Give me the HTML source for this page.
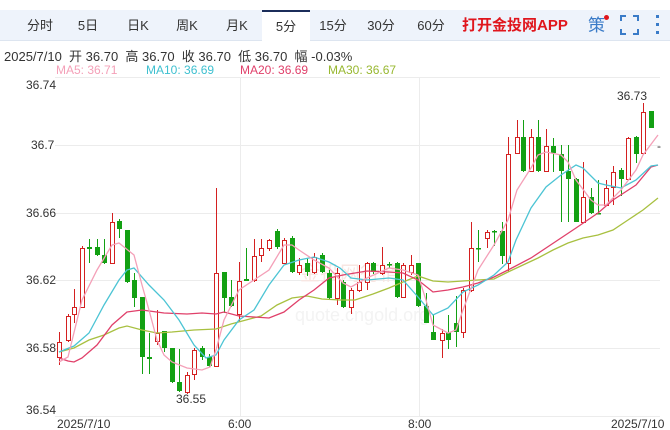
<!DOCTYPE html>
<html><head><meta charset="utf-8"><style>
*{margin:0;padding:0;box-sizing:border-box}
body{width:670px;height:430px;background:#fff;font-family:"Liberation Sans","Noto Sans CJK SC",sans-serif;position:relative;overflow:hidden}
.tabs{position:absolute;top:10px;left:0;width:670px;height:31px;background:#eef3fb;border-bottom:1px solid #dde5f0}
.tab{position:absolute;top:10px;height:31px;line-height:31px;font-size:13px;color:#333;text-align:center}
.sel{background:#fff;border-top:2px solid #1b2d5a;line-height:29px;height:32px}
.app{position:absolute;left:462px;top:10px;line-height:31px;font-size:15px;font-weight:bold;color:#e0161d}
.ce{position:absolute;left:588px;top:10px;line-height:31px;font-size:17px;color:#3a7bc8}
.dot{position:absolute;left:604px;top:15px;width:5px;height:5px;border-radius:50%;background:#e0161d}
.info{position:absolute;left:4px;top:46px;font-size:13px;color:#333;white-space:nowrap}
.ma{position:absolute;top:63px;font-size:12px;white-space:nowrap}
</style></head><body>
<div class="tabs"></div>
<div class="tab" style="left:18px;width:44px">分时</div>
<div class="tab" style="left:66px;width:44px">5日</div>
<div class="tab" style="left:116px;width:44px">日K</div>
<div class="tab" style="left:164px;width:46px">周K</div>
<div class="tab" style="left:214px;width:46px">月K</div>
<div class="tab sel" style="left:262px;width:48px">5分</div>
<div class="tab" style="left:310px;width:46px">15分</div>
<div class="tab" style="left:358px;width:46px">30分</div>
<div class="tab" style="left:406px;width:50px">60分</div>
<div class="app">打开金投网APP</div>
<div class="ce">策</div><div class="dot"></div>
<svg style="position:absolute;left:0;top:0" width="670" height="430">
<g stroke="#3a7bc8" stroke-width="2" fill="none">
<path d="M621 21v-5h5M633 16h5v5M638 29v5h-5M626 34h-5v-5"/></g>
<g fill="#3a7bc8"><rect x="656" y="15" width="3" height="3"/><rect x="656" y="23" width="3" height="3"/><rect x="656" y="31" width="3" height="3"/></g>
<g stroke="#ececec" stroke-width="1">
<line x1="55" y1="77.5" x2="660" y2="77.5"/><line x1="55" y1="145.5" x2="660" y2="145.5"/><line x1="55" y1="213.5" x2="660" y2="213.5"/><line x1="55" y1="280.5" x2="660" y2="280.5"/><line x1="55" y1="348.5" x2="660" y2="348.5"/><line x1="55" y1="416.5" x2="660" y2="416.5"/>
<line x1="240.5" y1="77" x2="240.5" y2="416"/><line x1="419.5" y1="77" x2="419.5" y2="416"/>
</g>
<g font-size="12" fill="#333">
<text x="26" y="89">36.74</text><text x="31" y="149">36.7</text><text x="26" y="217">36.66</text><text x="26" y="284">36.62</text><text x="26" y="352">36.58</text><text x="26" y="414">36.54</text>
<text x="57" y="428">2025/7/10</text><text x="228" y="428">6:00</text><text x="408" y="428">8:00</text><text x="611" y="428">2025/7/10</text>
<text x="176" y="403">36.55</text><text x="617" y="100">36.73</text><text x="657" y="150">-</text>
</g>
<text x="300" y="280" font-size="20" fill="#f8e6e2">金投网行情</text>
<text x="295" y="321" font-size="18" fill="#f3f3f3">quote.cngold.org</text>
<g id="c"></g>
<g fill="none" stroke-width="1.3">
<polyline stroke="#a8c040" points="59,352 74,348 89,340 104,335 119,328 127,326 142,330 157,333 172,332 194,330 216,329 231,324 246,320 261,316 277,305 292,298 307,296 322,299 340,300 355,300 373,294 389,288 403,282 418,276 433,281 448,282 463,281 478,280 494,279 508,272 523,265 538,258 553,250 568,243 583,238 598,235 613,230 628,220 643,210 658,198"/>
<polyline stroke="#e0406a" points="59,358 68,361 74,362 82,358 97,345 112,325 127,312 142,310 164,313 187,314 202,313 216,314 224,312 239,316 254,317 269,318 284,312 299,300 314,290 329,278 343,275 367,271 389,272 403,273 418,280 433,292 448,290 463,287 478,283 494,277 508,270 531,258 546,248 561,238 576,228 598,213 613,200 636,185 651,167 658,165"/>
<polyline stroke="#4cc4d4" points="59,352 74,346 89,333 104,305 119,280 127,270 134,268 149,285 164,300 179,320 194,345 206,358 216,355 224,340 239,320 254,310 269,285 284,265 299,260 314,257 329,262 340,268 351,278 367,280 389,278 403,280 418,297 433,315 448,308 463,292 478,285 494,275 508,262 516,240 531,208 546,187 561,175 576,165 583,168 598,183 606,185 621,188 636,180 651,166 658,165"/>
<polyline stroke="#f4a0b8" points="59,362 68,357 82,300 97,270 112,245 119,243 134,255 142,285 149,310 157,340 164,355 172,362 187,368 202,370 210,367 216,350 224,320 239,290 254,280 269,270 284,245 292,245 299,250 314,260 329,268 343,283 351,287 367,278 389,268 403,270 418,275 426,300 433,325 448,333 456,330 463,310 478,270 494,245 508,220 517,190 531,168 538,155 546,152 561,155 568,162 576,180 591,200 598,205 606,205 621,190 636,170 643,155 658,135"/>
</g>
</svg>
<div class="info">2025/7/10&nbsp; 开 36.70&nbsp; 高 36.70&nbsp; 收 36.70&nbsp; 低 36.70&nbsp; 幅 -0.03%</div>
<div class="ma" style="left:56px;color:#f4a0b8">MA5: 36.71</div>
<div class="ma" style="left:146px;color:#3ec0d0">MA10: 36.69</div>
<div class="ma" style="left:240px;color:#e0406a">MA20: 36.69</div>
<div class="ma" style="left:328px;color:#98b830">MA30: 36.67</div>
<script>
var d=[[59,342,357,332,365,1],[68,316,340,314,342,1],[74,307,314,289,323,1],[82,248,307,246,308,1],[89,247,249,239,263,0],[97,247,255,239,256,0],[104,255,263,239,264,0],[112,222,263,213,264,1],[119,221,229,219,238,0],[127,230,282,230,283,0],[134,280,298,273,307,0],[142,297,357,297,374,0],[149,357,359,333,374,0],[157,333,341,310,345,1],[164,331,348,331,352,0],[172,348,382,348,383,0],[179,382,391,349,392,0],[187,375,392,372,394,1],[194,350,374,348,380,1],[202,348,357,346,360,0],[209,357,366,354,367,0],[216,273,366,188,367,1],[224,272,298,272,313,0],[231,297,306,280,307,0],[239,281,314,262,322,1],[246,279,281,248,281,0],[254,256,280,239,282,1],[261,248,255,239,262,1],[269,240,248,239,251,1],[277,231,247,229,249,0],[284,240,263,238,264,1],[292,238,272,236,273,0],[299,265,272,258,275,1],[307,263,272,258,276,0],[314,257,272,253,274,1],[322,255,272,253,273,0],[329,273,298,270,300,0],[337,273,298,268,305,1],[343,282,307,280,308,0],[351,290,307,288,314,1],[359,282,290,265,292,1],[367,263,282,262,290,1],[373,263,272,262,274,0],[382,265,273,247,275,1],[389,264,265,262,268,0],[397,263,297,262,298,0],[403,265,297,263,298,1],[411,265,272,255,275,1],[418,263,306,263,307,0],[426,306,323,293,323,0],[433,332,340,315,340,0],[442,333,340,329,358,1],[448,332,340,315,349,0],[456,323,332,296,347,0],[463,290,332,288,338,1],[471,248,290,222,292,1],[478,248,249,230,262,0],[487,232,238,230,248,1],[494,231,232,230,246,0],[502,231,256,222,264,0],[508,154,263,137,272,1],[517,137,153,120,154,1],[523,137,171,120,172,0],[531,137,171,129,172,1],[538,137,171,120,172,0],[546,146,171,129,172,1],[553,146,153,138,172,0],[561,154,171,145,222,0],[568,171,179,145,222,0],[576,179,222,178,222,0],[583,197,222,162,223,1],[591,197,213,188,214,0],[598,213,214,180,214,0],[606,188,205,180,205,1],[613,172,187,166,205,1],[621,170,179,168,196,0],[628,138,179,137,180,1],[636,137,154,136,163,0],[643,112,153,103,155,1],[651,111,128,111,128,0]];
var s='';d.forEach(function(a){var c=a[5]?'#d42020':'#13a013';s+='<line x1="'+(a[0]+.5)+'" y1="'+a[3]+'" x2="'+(a[0]+.5)+'" y2="'+a[4]+'" stroke="'+c+'"/>';
if(a[5])s+='<rect x="'+(a[0]-1.5)+'" y="'+(a[1]+.5)+'" width="4" height="'+Math.max(a[2]-a[1],1)+'" fill="#fff" stroke="'+c+'"/>';else s+='<rect x="'+(a[0]-2)+'" y="'+a[1]+'" width="5" height="'+Math.max(a[2]-a[1],1.5)+'" fill="'+c+'"/>';});
document.getElementById('c').innerHTML=s;
</script>
</body></html>
